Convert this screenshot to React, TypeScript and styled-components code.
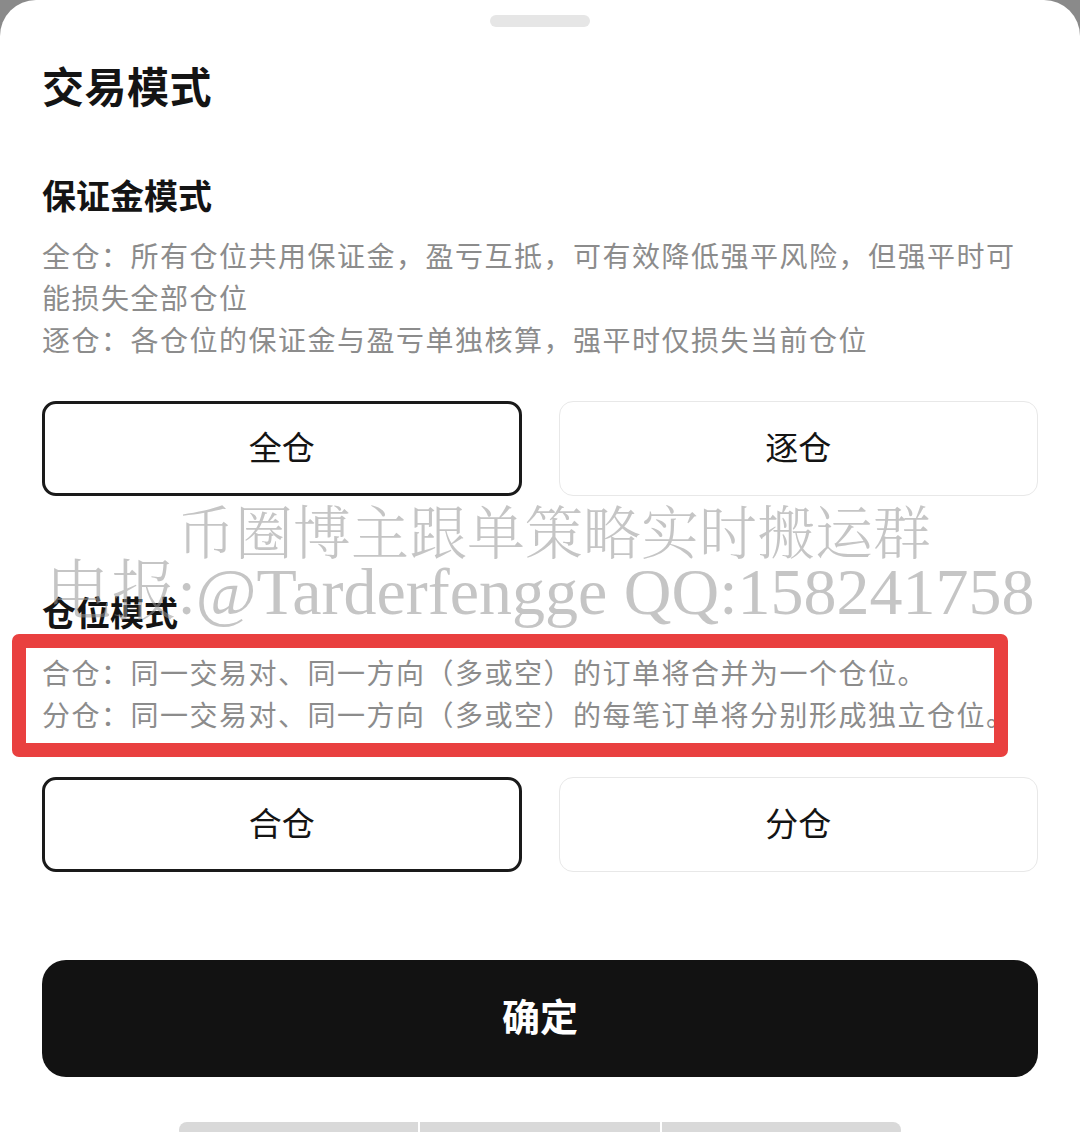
import React from "react";
import styled, { createGlobalStyle } from "styled-components";

const Global = createGlobalStyle`
  html, body { margin: 0; padding: 0; background: #8a8a8a; }
  body { font-family: "Noto Sans CJK SC", "Noto Sans", sans-serif; }
  * { box-sizing: border-box; }
`;

const Sheet = styled.div`
  position: relative;
  width: 1080px;
  height: 1132px;
  overflow: hidden;
  background: #ffffff;
  border-radius: 36px 36px 0 0;
  padding: 0 42px;
  display: flex;
  flex-direction: column;
  & > * { flex-shrink: 0; }
`;

const Handle = styled.div`
  align-self: center;
  width: 100px;
  height: 12px;
  margin-top: 15px;
  border-radius: 6px;
  background: #e6e6e6;
`;

const Title = styled.h1`
  margin: 30px 0 0;
  font-size: 42px;
  line-height: 56px;
  font-weight: 700;
  color: #141414;
  letter-spacing: 0.5px;
`;

const SectionTitle = styled.h2<{ $top: number }>`
  margin: ${(p) => p.$top}px 0 0;
  font-size: 34px;
  line-height: 44px;
  font-weight: 700;
  color: #141414;
`;

const Desc = styled.div<{ $top: number }>`
  margin-top: ${(p) => p.$top}px;
  font-size: 28px;
  line-height: 42px;
  letter-spacing: 1.5px;
  color: #8c8c8c;
`;

const Highlight = styled.div`
  margin: 0 0 0 -30px;
  width: 996px;
  border: 14px solid #e9403f;
  border-radius: 7px;
  padding: 3px 0 8px 16px;
  overflow: hidden;
  white-space: nowrap;
  font-size: 28px;
  line-height: 42px;
  letter-spacing: 1.5px;
  color: #8c8c8c;
`;

const OptionRow = styled.div<{ $top: number }>`
  margin-top: ${(p) => p.$top}px;
  display: grid;
  grid-template-columns: 1fr 1fr;
  gap: 37px;
`;

const Option = styled.button<{ $active?: boolean }>`
  height: 95px;
  border-radius: 14px;
  background: #ffffff;
  border: ${(p) => (p.$active ? "3px solid #1a1a1a" : "1.5px solid #e8e8e8")};
  font-family: inherit;
  font-size: 33px;
  line-height: 1;
  color: #141414;
  display: flex;
  align-items: center;
  justify-content: center;
  padding: 0 0 4px;
`;

const Confirm = styled.button`
  margin-top: 88px;
  height: 117px;
  border: none;
  border-radius: 24px;
  background: #121212;
  color: #ffffff;
  font-family: inherit;
  font-size: 38px;
  font-weight: 700;
  display: flex;
  align-items: center;
  justify-content: center;
  padding: 0 0 8px;
`;

const HomeBar = styled.div`
  align-self: center;
  margin-top: 45px;
  width: 722px;
  height: 16px;
  display: grid;
  grid-template-columns: 1fr 1fr 1fr;
  gap: 2px;
`;

const HomeSeg = styled.div<{ $pos: "l" | "m" | "r" }>`
  background: #d9d9d9;
  border-radius: ${(p) =>
    p.$pos === "l" ? "8px 0 0 8px" : p.$pos === "r" ? "0 8px 8px 0" : "0"};
`;

const Watermark = styled.div`
  position: absolute;
  left: 0;
  right: 0;
  top: 508px;
  display: flex;
  flex-direction: column;
  align-items: center;
  pointer-events: none;
  font-family: "Liberation Serif", "Noto Serif CJK SC", "Noto Sans CJK SC", serif;
  font-weight: 300;
  color: rgba(150, 150, 150, 0.55);
`;

const WmLine = styled.div<{ $size: number; $shift: number }>`
  font-size: ${(p) => p.$size}px;
  line-height: ${(p) => Math.round(p.$size * 0.92)}px;
  margin-left: ${(p) => p.$shift}px;
  white-space: nowrap;
`;

export default function App() {
  return (
    <>
      <Global />
      <Sheet>
        <Handle />
        <Title>交易模式</Title>

        <SectionTitle $top={60}>保证金模式</SectionTitle>
        <Desc $top={17}>
          全仓：所有仓位共用保证金，盈亏互抵，可有效降低强平风险，但强平时可能损失全部仓位
          <br />
          逐仓：各仓位的保证金与盈亏单独核算，强平时仅损失当前仓位
        </Desc>
        <OptionRow $top={41}>
          <Option $active>全仓</Option>
          <Option>逐仓</Option>
        </OptionRow>

        <SectionTitle $top={94}>仓位模式</SectionTitle>
        <Highlight>
          合仓：同一交易对、同一方向（多或空）的订单将合并为一个仓位。
          <br />
          分仓：同一交易对、同一方向（多或空）的每笔订单将分别形成独立仓位。
        </Highlight>
        <OptionRow $top={20}>
          <Option $active>合仓</Option>
          <Option>分仓</Option>
        </OptionRow>

        <Confirm>确定</Confirm>

        <HomeBar>
          <HomeSeg $pos="l" />
          <HomeSeg $pos="m" />
          <HomeSeg $pos="r" />
        </HomeBar>

        <Watermark>
          <WmLine $size={58} $shift={28}>币圈博主跟单策略实时搬运群</WmLine>
          <WmLine $size={66} $shift={0}>电报:@Tarderfengge QQ:158241758</WmLine>
        </Watermark>
      </Sheet>
    </>
  );
}
